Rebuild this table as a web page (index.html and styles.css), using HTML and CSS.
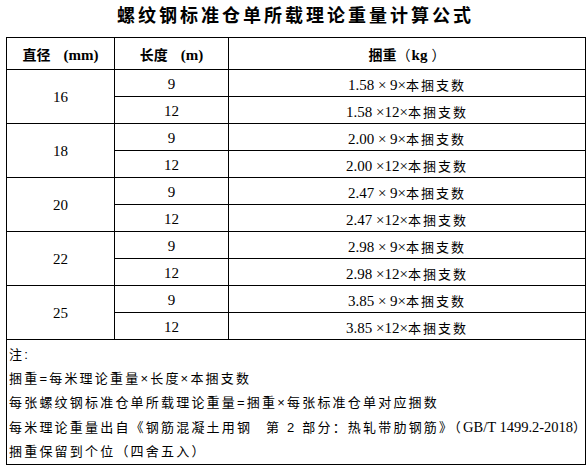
FILE: index.html
```html
<!DOCTYPE html>
<html lang="zh-CN">
<head>
<meta charset="utf-8">
<title>螺纹钢标准仓单所载理论重量计算公式</title>
<link rel="stylesheet" href="styles.css">
</head>
<body>
<h1 class="title">螺纹钢标准仓单所载理论重量计算公式</h1>
<table class="sheet">
  <colgroup><col class="c1"><col class="c2"><col class="c3"></colgroup>
  <thead>
    <tr class="head">
      <th>直径<span class="unit">(mm)</span></th>
      <th>长度<span class="unit">(m)</span></th>
      <th>捆重<span class="paren open">（</span><span class="kg">kg</span><span class="paren close">）</span></th>
    </tr>
  </thead>
  <tbody>
    <tr><td rowspan="2" class="dia">16</td><td class="len">9</td><td class="formula">1.58 × 9×<span class="cjk">本捆支数</span></td></tr>
    <tr><td class="len">12</td><td class="formula">1.58 ×12×<span class="cjk">本捆支数</span></td></tr>
    <tr><td rowspan="2" class="dia">18</td><td class="len">9</td><td class="formula">2.00 × 9×<span class="cjk">本捆支数</span></td></tr>
    <tr><td class="len">12</td><td class="formula">2.00 ×12×<span class="cjk">本捆支数</span></td></tr>
    <tr><td rowspan="2" class="dia">20</td><td class="len">9</td><td class="formula">2.47 × 9×<span class="cjk">本捆支数</span></td></tr>
    <tr><td class="len">12</td><td class="formula">2.47 ×12×<span class="cjk">本捆支数</span></td></tr>
    <tr><td rowspan="2" class="dia">22</td><td class="len">9</td><td class="formula">2.98 × 9×<span class="cjk">本捆支数</span></td></tr>
    <tr><td class="len">12</td><td class="formula">2.98 ×12×<span class="cjk">本捆支数</span></td></tr>
    <tr><td rowspan="2" class="dia">25</td><td class="len">9</td><td class="formula">3.85 × 9×<span class="cjk">本捆支数</span></td></tr>
    <tr><td class="len">12</td><td class="formula">3.85 ×12×<span class="cjk">本捆支数</span></td></tr>
    <tr class="notes-row">
      <td colspan="3" class="notes">
        <p>注:</p>
        <p>捆重=每米理论重量×长度×本捆支数</p>
        <p>每张螺纹钢标准仓单所载理论重量=捆重×每张标准仓单对应捆数</p>
        <p>每米理论重量出自《钢筋混凝土用钢 <span class="part">第 2 部分</span>：热轧带肋钢筋》（<span class="std">GB/T 1499.2-2018</span>）</p>
        <p>捆重保留到个位（四舍五入）</p>
      </td>
    </tr>
  </tbody>
</table>
</body>
</html>
```

FILE: styles.css
```css
* {
  box-sizing: border-box;
}

body {
  margin: 0;
  background: #ffffff;
  color: #000000;
  font-family: "Liberation Serif", "Noto Sans CJK SC", serif;
}

.title {
  margin: 0;
  height: 37px;
  line-height: 28px;
  padding-left: 3px;
  font-family: "Noto Sans CJK SC", sans-serif;
  font-size: 18px;
  font-weight: 700;
  letter-spacing: 3px;
  text-align: center;
}

.sheet {
  margin-left: 6px;
  width: 579px;
  border-collapse: collapse;
  table-layout: fixed;
}

.c1 { width: 108px; }
.c2 { width: 114px; }
.c3 { width: 357px; }

.sheet th,
.sheet td {
  border: 1px solid #000000;
  padding: 0;
  text-align: center;
  vertical-align: middle;
}

.head {
  height: 32px;
}

.head th {
  font-family: "Noto Sans CJK SC", sans-serif;
  font-size: 14px;
  font-weight: 700;
  white-space: nowrap;
}

.unit {
  margin-left: 13px;
  font-family: "Liberation Serif", serif;
  font-size: 15px;
  font-weight: 700;
}

.kg {
  margin-left: 1px;
  margin-right: 4px;
  font-family: "Liberation Serif", serif;
  font-size: 15px;
  font-weight: 700;
}

.paren {
  font-weight: 400;
}

tbody tr {
  height: 27px;
}

.sheet td {
  font-size: 15px;
  padding-top: 2px;
}

.cjk {
  font-family: "Noto Sans CJK SC", sans-serif;
  font-size: 13px;
  letter-spacing: 2px;
}

.notes-row {
  height: 124px;
}

.sheet td.notes {
  text-align: left;
  vertical-align: top;
  padding: 3px 0 0 2px;
  font-family: "Liberation Sans", "Noto Sans CJK SC", sans-serif;
  font-size: 13px;
  letter-spacing: 2.2px;
}

.notes p {
  margin: 0;
  line-height: 24px;
  white-space: nowrap;
}

.part {
  margin-left: 8px;
}

.std {
  font-family: "Liberation Serif", serif;
  font-size: 14.5px;
  letter-spacing: 0;
}
```
